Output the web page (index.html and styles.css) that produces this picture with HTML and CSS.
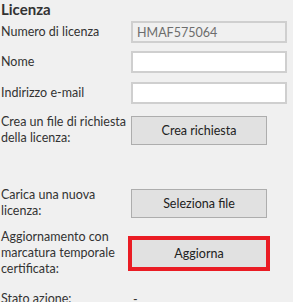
FILE: index.html
```html
<!DOCTYPE html>
<html>
  <head>
    <meta charset="utf-8" />
    <title>Licenza</title>
    <link rel="stylesheet" href="styles.css">
  </head>
  <body>
    <div class="panel">
      <h2 class="title">Licenza</h2>
      <div class="row row-first">
        <label class="label">Numero di licenza</label>
        <input type="text" class="field" value="HMAF575064" disabled />
      </div>
      <div class="row row-name">
        <label class="label">Nome</label>
        <input type="text" class="field" />
      </div>
      <div class="row row-mail">
        <label class="label">Indirizzo e-mail</label>
        <input type="text" class="field" />
      </div>
      <div class="row row-request">
        <label class="label">Crea un file di richiesta della licenza:</label>
        <button class="button">Crea richiesta</button>
      </div>
      <div class="row row-upload">
        <label class="label">Carica una nuova licenza:</label>
        <button class="button">Seleziona file</button>
      </div>
      <div class="row row-update">
        <label class="label">Aggiornamento con marcatura temporale certificata:</label>
        <button class="button button-marked">Aggiorna</button>
      </div>
      <div class="row row-status">
        <span class="label">Stato azione:</span>
        <span class="status">-</span>
      </div>
    </div>
  </body>
</html>
```

FILE: styles.css
```css
* {
  margin: 0;
  padding: 0;
  box-sizing: border-box;
}
body {
  background: #f0f0f0;
  font-family: Lato, "Noto Sans", sans-serif;
  font-size: 12.5px;
  color: #333;
  overflow: hidden;
}
.panel {
  padding-left: 1px;
}
.title {
  font-size: 15px;
  font-weight: 700;
  line-height: 18px;
  color: #333;
}
.row {
  display: grid;
  grid-template-columns: 130px 1fr;
  align-items: center;
}
.row-first {
  margin-top: 3px;
}
.row-name {
  margin-top: 8px;
}
.row-mail {
  margin-top: 9px;
}
.row-request {
  margin-top: 10px;
}
.row-upload {
  margin-top: 41px;
}
.row-update {
  margin-top: 10px;
}
.row-status {
  margin-top: 14px;
}
.label {
  line-height: 16px;
  padding-right: 2px;
}
.field {
  width: 156px;
  height: 22px;
  border: 2px solid #cfcfcf;
  background: white;
  font-family: inherit;
  font-size: 12.5px;
  padding: 0 4px;
  color: #333;
}
.field:disabled {
  background: #f0f0f0;
  color: #6d6d6d;
}
.button {
  width: 136px;
  height: 29px;
  border: 1px solid #adadad;
  background: #e1e1e1;
  font-family: inherit;
  font-size: 12.5px;
  color: #222;
}
.button-marked {
  outline: 4px solid #ea1c24;
  outline-offset: -1px;
}
.status {
  padding-left: 2px;
}
```
